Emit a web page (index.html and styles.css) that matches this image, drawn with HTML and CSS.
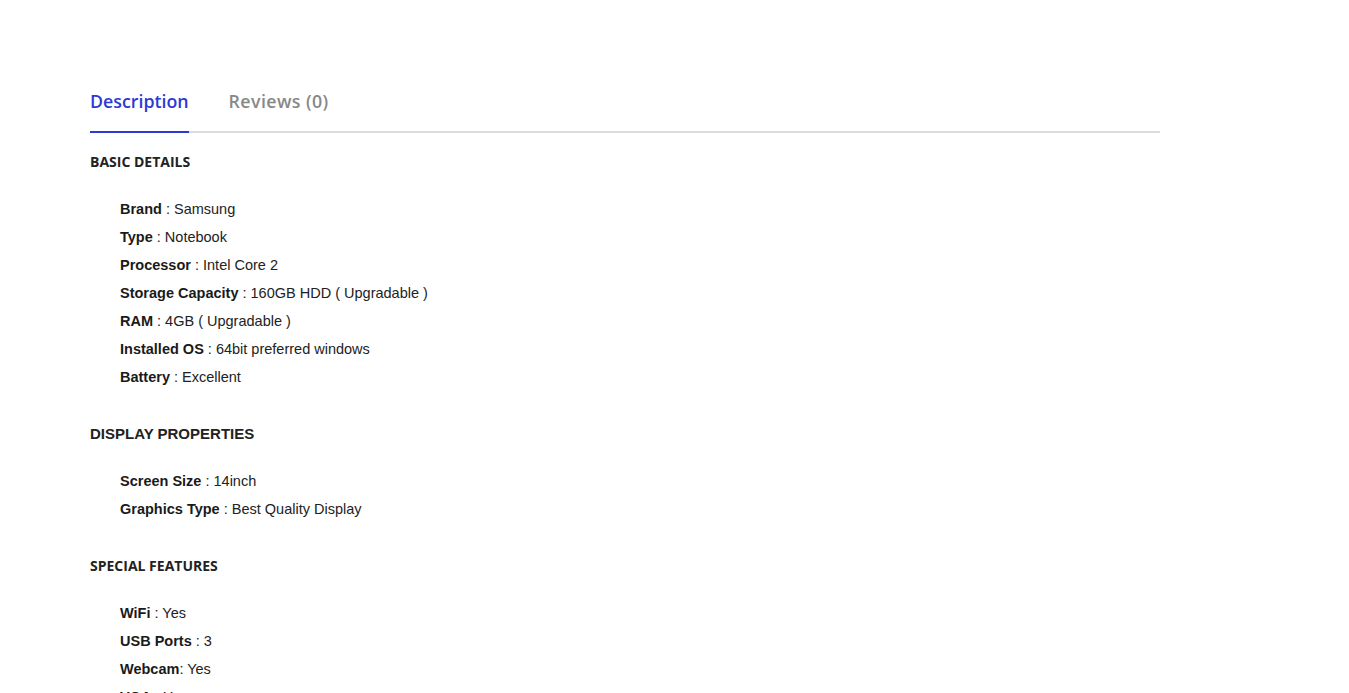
FILE: index.html
```html
<!DOCTYPE html>
<html lang="en">
<head>
<meta charset="utf-8">
<title>Product Description</title>
<link rel="stylesheet" href="styles.css">
</head>
<body>
<div class="wrap">
  <div class="tabs">
    <div class="tab active">Description</div>
    <div class="tab">Reviews (0)</div>
  </div>
  <div class="content">
    <h4 class="sec sec-os">BASIC DETAILS</h4>
    <ul class="specs">
      <li><b>Brand</b> : Samsung</li>
      <li><b>Type</b> : Notebook</li>
      <li><b>Processor</b> : Intel Core 2</li>
      <li><b>Storage Capacity</b> : 160GB HDD ( Upgradable )</li>
      <li><b>RAM</b> : 4GB ( Upgradable )</li>
      <li><b>Installed OS</b> : 64bit preferred windows</li>
      <li><b>Battery</b> : Excellent</li>
    </ul>
    <h4 class="sec sec-arial">DISPLAY PROPERTIES</h4>
    <ul class="specs">
      <li><b>Screen Size</b> : 14inch</li>
      <li><b>Graphics Type</b> : Best Quality Display</li>
    </ul>
    <h4 class="sec sec-os">SPECIAL FEATURES</h4>
    <ul class="specs">
      <li><b>WiFi</b> : Yes</li>
      <li><b>USB Ports</b> : 3</li>
      <li><b>Webcam</b>: Yes</li>
      <li><b>VGA</b> : Yes</li>
    </ul>
  </div>
</div>
</body>
</html>
```
FILE: styles.css
```css
html, body {
  margin: 0;
  padding: 0;
  background: #fff;
}
body {
  font-family: "Liberation Sans", Arial, sans-serif;
  color: #222;
  font-size: 14px;
}
.wrap {
  width: 1070px;
  margin-left: 90px;
  padding-top: 89px;
}
.tabs {
  display: flex;
  gap: 40px;
  border-bottom: 2px solid #dcdcdc;
}
.tab {
  font-family: "Open Sans", sans-serif;
  font-weight: 600;
  font-size: 17.8px;
  line-height: 24px;
  color: #888;
  padding-bottom: 18px;
  margin-bottom: -2px;
  border-bottom: 2px solid transparent;
}
.tab.active {
  color: #2b39d6;
  border-bottom-color: #2b39d6;
}
.tab.active + .tab {
  letter-spacing: 0.4px;
}
.content {
  padding-top: 19px;
}
.sec {
  margin: 0;
  line-height: 20px;
  color: #222;
  text-transform: uppercase;
}
.sec-os {
  font-family: "Open Sans", sans-serif;
  font-weight: 700;
  font-size: 14px;
}
.sec-arial {
  font-family: "Liberation Sans", Arial, sans-serif;
  font-weight: 700;
  font-size: 15px;
}
.specs {
  list-style: none;
  margin: 23px 0 33px;
  padding: 0 0 0 30px;
}
.specs li {
  line-height: 28px;
  font-size: 14.5px;
  color: #222;
}
.specs b {
  font-weight: 700;
  color: #1a1a1a;
}
```
